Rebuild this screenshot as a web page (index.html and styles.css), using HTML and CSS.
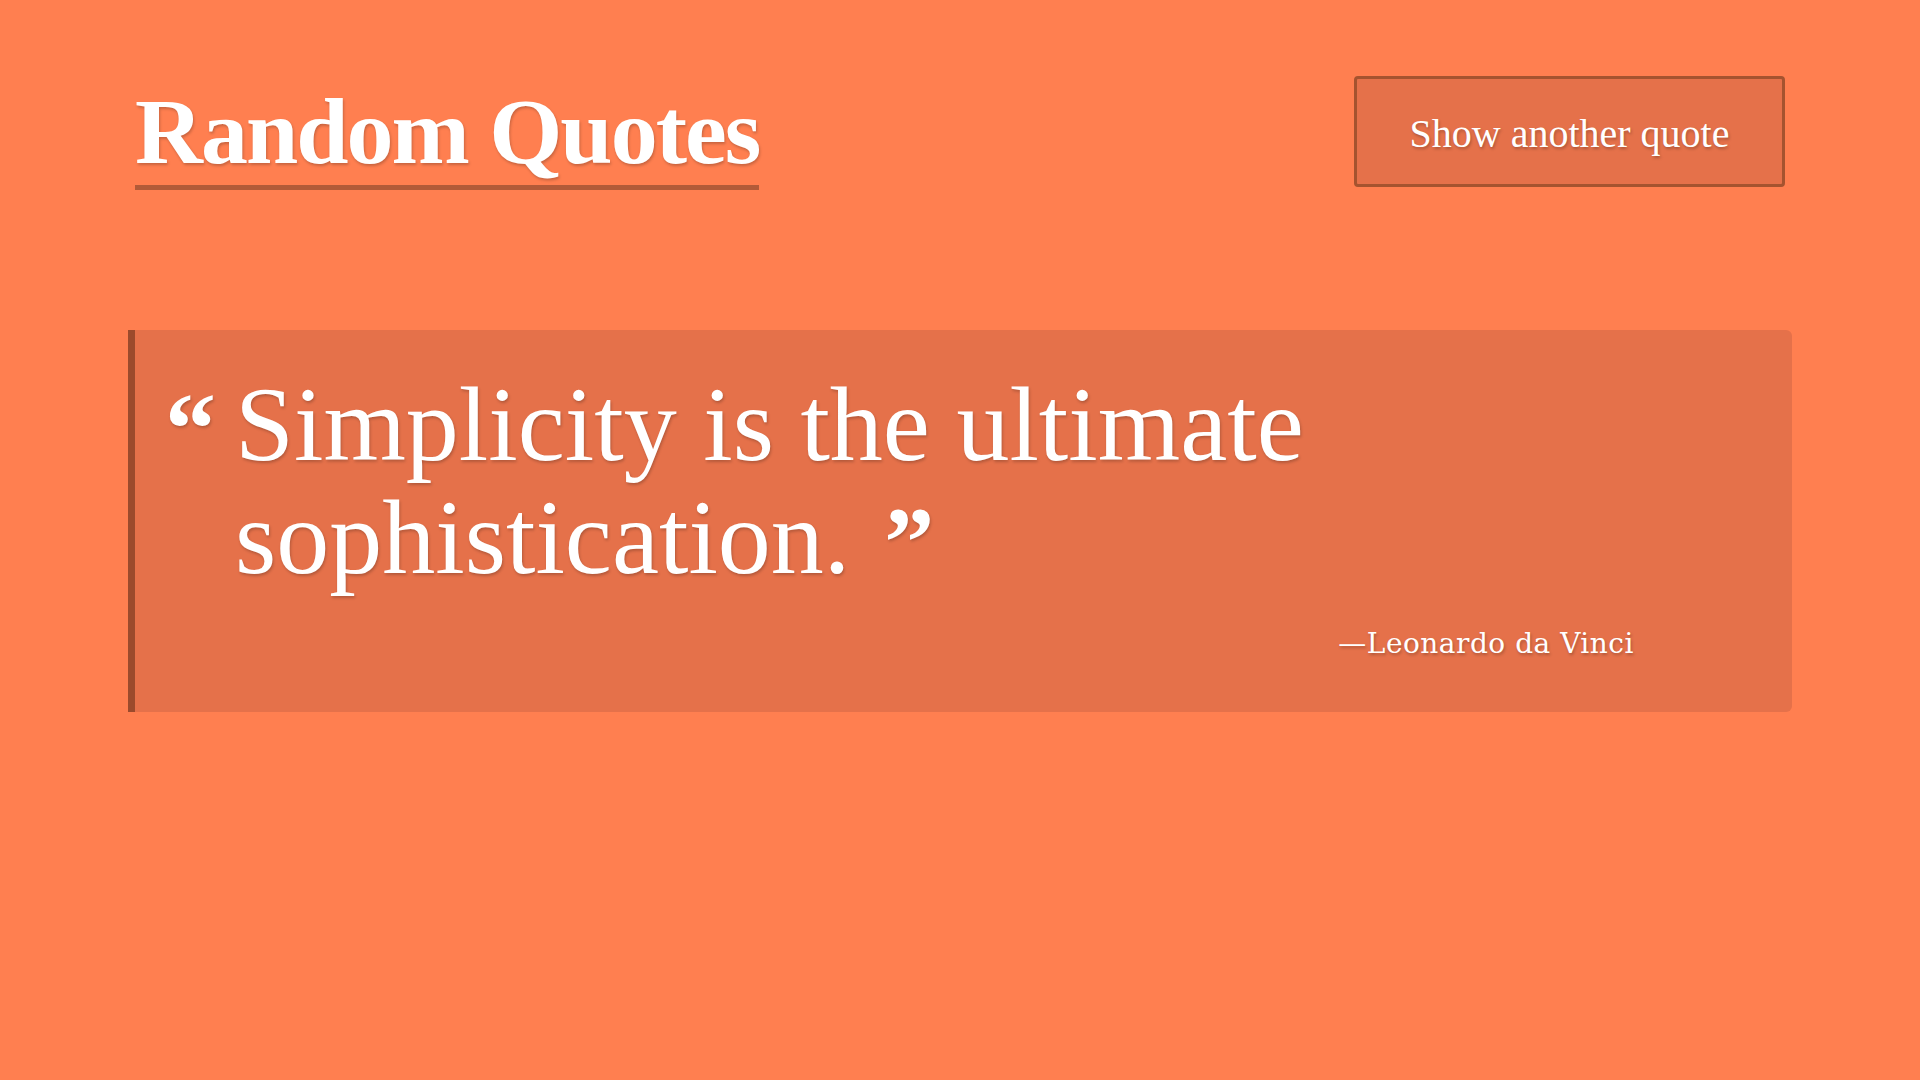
FILE: index.html
```html
<!DOCTYPE html>
<html lang="en">
<head>
<meta charset="utf-8">
<title>Random Quotes</title>
<link rel="stylesheet" href="styles.css">
</head>
<body>
<div class="page">
  <header class="header">
    <h1 class="title">Random Quotes</h1>
    <button class="btn" type="button">Show another quote</button>
  </header>
  <section class="quote-box">
    <div class="quote-row">
      <span class="mark-open">&ldquo;</span>
      <p class="quote-text">Simplicity is the ultimate sophistication.</p>
    </div>
    <p class="author">&mdash;Leonardo da Vinci</p>
  </section>
</div>
</body>
</html>
```
FILE: styles.css
```css
* { box-sizing: border-box; }
html, body { margin: 0; padding: 0; }
body {
  background: #ff7f50;
  min-height: 100vh;
  color: #ffffff;
  font-family: "Liberation Serif", "Times New Roman", serif;
}
.page {
  width: 1664px;
  margin: 0 auto;
}
.header {
  display: flex;
  justify-content: space-between;
  align-items: flex-start;
  padding: 76px 7px 0 7px;
}
.title {
  margin: 8px 0 0 0;
  font-size: 94px;
  font-weight: 700;
  line-height: 1;
  letter-spacing: -2px;
  padding-bottom: 7px;
  border-bottom: 5px solid #b25a38;
  text-shadow: 1px 2px 3px rgba(0,0,0,0.22);
}
.btn {
  width: 431px;
  height: 111px;
  margin: 0;
  background: #e5714a;
  border: 3px solid #a5532f;
  border-radius: 4px;
  color: #ffffff;
  font-family: "Liberation Serif", "Times New Roman", serif;
  font-size: 40px;
  line-height: 48px;
  padding: 4px 0 0 0;
  text-shadow: 1px 2px 3px rgba(0,0,0,0.25);
  cursor: pointer;
}
.quote-box {
  margin-top: 140px;
  background: #e5714a;
  border-left: 7px solid #9c4a2c;
  border-radius: 0 6px 6px 0;
  padding: 38px 158px 48px 30px;
}
.quote-row {
  display: flex;
  align-items: flex-start;
}
.mark-open {
  flex: 0 0 auto;
  width: 70px;
  font-size: 102px;
  font-weight: 700;
  line-height: 100px;
  margin-top: 11px;
  text-shadow: 1px 2px 3px rgba(0,0,0,0.22);
}
.quote-text {
  margin: 0;
  width: 1300px;
  max-width: 1300px;
  font-size: 106px;
  line-height: 113px;
  text-shadow: 1px 2px 3px rgba(0,0,0,0.22);
}
.quote-text::after {
  content: "\201D";
  margin-left: 34px;
  font-size: 100px;
  font-weight: 700;
  line-height: 100px;
  vertical-align: -2px;
}
.author {
  margin: 30px 0 0 0;
  text-align: right;
  font-family: "DejaVu Serif", serif;
  font-size: 28px;
  line-height: 40px;
  letter-spacing: 0.5px;
  text-shadow: 1px 2px 3px rgba(0,0,0,0.25);
}
```
